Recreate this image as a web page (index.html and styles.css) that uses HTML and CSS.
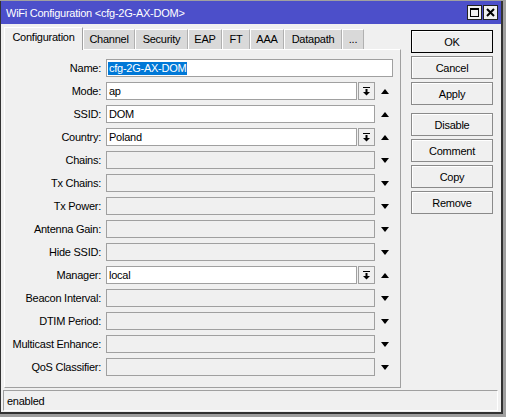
FILE: index.html
```html
<!DOCTYPE html>
<html>
<head>
<meta charset="utf-8">
<link rel="stylesheet" href="styles.css">
</head>
<body>
<div class="window">
  <div class="titlebar">
    <span class="title">WiFi Configuration &lt;cfg-2G-AX-DOM&gt;</span>
    <span class="tbtn"><svg width="13" height="13" viewBox="0 0 13 13"><rect x="2.5" y="2.5" width="8" height="8" fill="none" stroke="#000" stroke-width="1"/><rect x="2" y="2" width="9" height="2" fill="#000"/></svg></span>
    <span class="tbtn"><svg width="13" height="13" viewBox="0 0 13 13"><path d="M3 3 L10 10 M10 3 L3 10" stroke="#000" stroke-width="2"/></svg></span>
  </div>
  <div class="main">
    <div class="leftcol">
      <div class="tabs">
        <div class="tab active">Configuration</div>
        <div class="tab">Channel</div>
        <div class="tab">Security</div>
        <div class="tab">EAP</div>
        <div class="tab">FT</div>
        <div class="tab">AAA</div>
        <div class="tab">Datapath</div>
        <div class="tab">...</div>
      </div>
      <div class="panel">
        <div class="row"><span class="lbl">Name:</span><div class="box w-full"><span class="sel">cfg-2G-AX-DOM</span></div></div>
        <div class="row"><span class="lbl">Mode:</span><div class="box w-dd">ap</div><span class="ddbtn"><svg width="9" height="9" viewBox="0 0 9 9"><rect x="1" y="0" width="7" height="1" fill="#000"/><rect x="3.5" y="2" width="2" height="3" fill="#000"/><path d="M1 5 H8 L4.5 8.5 Z" fill="#000"/></svg></span><span class="arr up"></span></div>
        <div class="row"><span class="lbl">SSID:</span><div class="box w-arrow">DOM</div><span class="arr up"></span></div>
        <div class="row"><span class="lbl">Country:</span><div class="box w-dd">Poland</div><span class="ddbtn"><svg width="9" height="9" viewBox="0 0 9 9"><rect x="1" y="0" width="7" height="1" fill="#000"/><rect x="3.5" y="2" width="2" height="3" fill="#000"/><path d="M1 5 H8 L4.5 8.5 Z" fill="#000"/></svg></span><span class="arr up"></span></div>
        <div class="row"><span class="lbl">Chains:</span><div class="box off w-arrow"></div><span class="arr down"></span></div>
        <div class="row"><span class="lbl">Tx Chains:</span><div class="box off w-arrow"></div><span class="arr down"></span></div>
        <div class="row"><span class="lbl">Tx Power:</span><div class="box off w-arrow"></div><span class="arr down"></span></div>
        <div class="row"><span class="lbl">Antenna Gain:</span><div class="box off w-arrow"></div><span class="arr down"></span></div>
        <div class="row"><span class="lbl">Hide SSID:</span><div class="box off w-arrow"></div><span class="arr down"></span></div>
        <div class="row"><span class="lbl">Manager:</span><div class="box w-dd">local</div><span class="ddbtn"><svg width="9" height="9" viewBox="0 0 9 9"><rect x="1" y="0" width="7" height="1" fill="#000"/><rect x="3.5" y="2" width="2" height="3" fill="#000"/><path d="M1 5 H8 L4.5 8.5 Z" fill="#000"/></svg></span><span class="arr up"></span></div>
        <div class="row"><span class="lbl">Beacon Interval:</span><div class="box off w-arrow"></div><span class="arr down"></span></div>
        <div class="row"><span class="lbl">DTIM Period:</span><div class="box off w-arrow"></div><span class="arr down"></span></div>
        <div class="row"><span class="lbl">Multicast Enhance:</span><div class="box off w-arrow"></div><span class="arr down"></span></div>
        <div class="row"><span class="lbl">QoS Classifier:</span><div class="box off w-arrow"></div><span class="arr down"></span></div>
      </div>
    </div>
    <div class="buttons">
      <div class="btn default">OK</div>
      <div class="btn">Cancel</div>
      <div class="btn">Apply</div>
      <div class="btn sep">Disable</div>
      <div class="btn">Comment</div>
      <div class="btn">Copy</div>
      <div class="btn">Remove</div>
    </div>
  </div>
  <div class="status">enabled</div>
</div>
</body>
</html>
```
FILE: styles.css
```css
html, body {
  margin: 0;
  padding: 0;
}
body {
  background: #a0a0a0;
  width: 506px;
  height: 417px;
  overflow: hidden;
  font-family: "Liberation Sans", Arial, sans-serif;
  font-size: 11px;
  letter-spacing: -0.25px;
  color: #000;
}
.window {
  margin-top: 1px;
  width: 503px;
  height: 413px;
  box-sizing: border-box;
  border-left: 1px solid #333;
  border-right: 2px solid #333;
  border-bottom: 2px solid #333;
  background: #f0f0f0;
  display: flex;
  flex-direction: column;
}
.titlebar {
  height: 23px;
  flex: none;
  background: #4c4fca;
  color: #fff;
  display: flex;
  align-items: center;
  padding: 0 3px 0 5px;
  gap: 1px;
}
.title {
  flex: 1;
  font-size: 11px;
}
.tbtn {
  width: 15px;
  height: 15px;
  box-sizing: border-box;
  border: 1px solid #222;
  background: #f0f0f0;
  display: flex;
  align-items: center;
  justify-content: center;
}
.tbtn svg { display: block; }
.main {
  display: flex;
  padding: 2px 0 0 3px;
}
.leftcol {
  width: 397px;
  display: flex;
  flex-direction: column;
}
.tabs {
  display: flex;
  align-items: flex-end;
  height: 23px;
}
.tab {
  height: 20px;
  box-sizing: border-box;
  padding: 3px 0 0;
  text-align: center;
  background: #d9d9d9;
  border-left: 1px solid #fff;
  border-top: 1px solid #fff;
  border-right: 1px solid #b0b0b0;
}
.tab:nth-child(1) { width: 79px; }
.tab:nth-child(2) { width: 52px; }
.tab:nth-child(3) { width: 53px; }
.tab:nth-child(4) { width: 34px; }
.tab:nth-child(5) { width: 28px; }
.tab:nth-child(6) { width: 34px; }
.tab:nth-child(7) { width: 58px; }
.tab:nth-child(8) { width: 22px; }
.tab.active {
  height: 23px;
  background: #f0f0f0;
  padding-top: 3px;
  margin-bottom: -1px;
  position: relative;
  z-index: 1;
  border-right-color: #a0a0a0;
}
.panel {
  height: 339px;
  box-sizing: border-box;
  border-left: 1px solid #fff;
  border-top: 1px solid #fff;
  border-right: 1px solid #a0a0a0;
  border-bottom: 1px solid #a0a0a0;
  padding-top: 9px;
}
.row {
  display: flex;
  align-items: center;
  height: 18px;
  margin-bottom: 5px;
}
.lbl {
  width: 96px;
  text-align: right;
  margin-right: 5px;
  white-space: nowrap;
}
.box {
  height: 18px;
  box-sizing: border-box;
  border: 1px solid #a0a0a0;
  background: #fff;
  padding: 0 2px;
  display: flex;
  align-items: center;
  white-space: nowrap;
}
.box.off { background: #f0f0f0; }
.w-full { width: 287px; }
.w-arrow { width: 269px; }
.w-dd { width: 251px; }
.sel {
  background: #0078d7;
  color: #fff;
  padding: 1px 0;
  margin-left: -1px;
  line-height: 11px;
  height: 13px;
  display: flex;
  align-items: center;
  padding: 0 1px;
}
.ddbtn {
  width: 17px;
  height: 18px;
  box-sizing: border-box;
  margin-left: 1px;
  border: 1px solid #a0a0a0;
  background: #f0f0f0;
  display: flex;
  align-items: center;
  justify-content: center;
}
.ddbtn svg { display: block; }
.arr {
  width: 0;
  height: 0;
  margin-left: 6px;
  border-left: 4.5px solid transparent;
  border-right: 4.5px solid transparent;
}
.arr.up { border-bottom: 5px solid #000; }
.arr.down { border-top: 5px solid #000; }
.buttons {
  margin-left: 10px;
  padding-top: 4px;
  display: flex;
  flex-direction: column;
}
.btn {
  width: 82px;
  height: 23px;
  box-sizing: border-box;
  border: 1px solid #8a8a8a;
  box-shadow: inset 1px 1px 0 #fff;
  background: #f0f0f0;
  display: flex;
  align-items: center;
  justify-content: center;
  margin-bottom: 3px;
}
.btn.default { border-color: #000; }
.btn.sep { margin-top: 5px; }
.status {
  margin: 2px 3px 0 2px;
  height: 21px;
  box-sizing: border-box;
  border-top: 1px solid #a0a0a0;
  border-left: 1px solid #a0a0a0;
  border-right: 1px solid #fff;
  border-bottom: 1px solid #fff;
  padding-left: 3px;
  display: flex;
  align-items: center;
}
```
